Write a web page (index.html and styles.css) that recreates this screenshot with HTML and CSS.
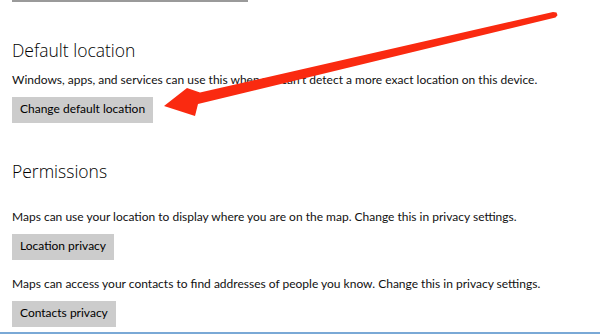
FILE: index.html
```html
<!DOCTYPE html>
<html lang="en">
<head>
    <meta charset="UTF-8">
    <meta name="viewport" content="width=device-width, initial-scale=1.0">
    <title>Maps settings</title>
    <link rel="stylesheet" href="styles.css">
</head>
<body>
    <div class="page">
        <div class="field-stub"></div>

        <h2 class="group-title">Default location</h2>
        <p class="desc">Windows, apps, and services can use this when we can't detect a more exact location on this device.</p>
        <button class="btn btn-first">Change default location</button>

        <h2 class="group-title">Permissions</h2>
        <p class="desc desc-gap">Maps can use your location to display where you are on the map. Change this in privacy settings.</p>
        <button class="btn">Location privacy</button>
        <p class="desc desc-next">Maps can access your contacts to find addresses of people you know. Change this in privacy settings.</p>
        <button class="btn">Contacts privacy</button>
    </div>
    <div class="bottom-line"></div>

    <!-- annotation arrow drawn over the screenshot -->
    <svg class="arrow" width="600" height="334" viewBox="0 0 600 334">
        <polygon points="164,106 187,88 200,92.5 553,12 556.5,12.6 557.5,15.2 555.5,17.4 198,104 195,116" fill="#fa2a10"/>
    </svg>
</body>
</html>
```

FILE: styles.css
```css
html, body {
    margin: 0;
    padding: 0;
}
body {
    position: relative;
    width: 600px;
    height: 334px;
    overflow: hidden;
    background-color: #ffffff;
    font-family: 'Lato', 'Open Sans', sans-serif;
    color: #111111;
}
.page {
    padding-left: 12px;
}
.field-stub {
    width: 232px;
    height: 0;
    border: 2px solid #9a9a9a;
    border-top: none;
}
.group-title {
    margin: 36px 0 0 0;
    font-family: 'Open Sans', sans-serif;
    font-size: 17.5px;
    font-weight: 300;
    line-height: 24px;
    color: #000000;
}
.desc {
    margin: 8px 0 0 0;
    font-size: 12px;
    line-height: 19px;
    white-space: nowrap;
}
.desc-gap {
    margin-top: 24px;
}
.desc-next {
    margin-top: 14px;
}
.btn {
    display: block;
    margin-top: 8px;
    padding: 3px 8px 5px 8px;
    border: none;
    border-radius: 0;
    background-color: #cccccc;
    font-family: inherit;
    font-size: 12px;
    line-height: 18px;
    color: #000000;
}
.btn-first {
    margin-top: 8px;
}
.bottom-line {
    position: absolute;
    left: 0;
    right: 0;
    bottom: 0;
    height: 2px;
    background-color: #7aa9d6;
}
.arrow {
    position: absolute;
    top: 0;
    left: 0;
    pointer-events: none;
}
```
